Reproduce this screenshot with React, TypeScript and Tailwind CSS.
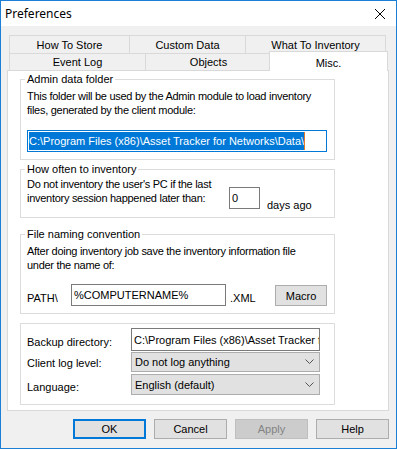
import React from "react";

const TOP_ROW = [
  { label: "How To Store", w: "w-[121px]" },
  { label: "Custom Data", w: "w-[117px]" },
  { label: "What To Inventory", w: "w-[141px]" },
];

const BOTTOM_ROW = [
  { label: "Event Log", w: "w-[137px]" },
  { label: "Objects", w: "w-[127px]" },
];

function Tab({ label, w, first }: { label: string; w: string; first?: boolean }) {
  return (
    <div
      className={`${w} ${first ? "" : "-ml-px"} flex h-full items-center justify-center border border-b-0 border-[#d9d9d9] bg-[#f0f0f0]`}
    >
      {label}
    </div>
  );
}

function Group({ title, className, children }: { title?: string; className: string; children: React.ReactNode }) {
  return (
    <div className={`relative w-[315px] border border-[#dcdcdc] pl-[6px] ${className}`}>
      {title && (
        <span className="absolute -top-[8px] left-[4px] bg-white px-[2px] leading-[14px]">{title}</span>
      )}
      {children}
    </div>
  );
}

function Chevron() {
  return (
    <svg width="9" height="6" viewBox="0 0 9 6" className="mr-[5px]">
      <polyline points="0.5,0.5 4.5,4.5 8.5,0.5" fill="none" stroke="#555" strokeWidth="1" />
    </svg>
  );
}

function Select({ value, className }: { value: string; className: string }) {
  return (
    <div
      className={`flex w-[189px] items-center justify-between border border-[#adadad] bg-[#e1e1e1] pl-[3px] ${className}`}
    >
      <span>{value}</span>
      <Chevron />
    </div>
  );
}

function Button({ label, primary, disabled }: { label: string; primary?: boolean; disabled?: boolean }) {
  const look = primary
    ? "border-2 border-[#0078d7] bg-[#e1e1e1]"
    : disabled
      ? "border border-[#bfbfbf] bg-[#cccccc] text-[#838383]"
      : "border border-[#adadad] bg-[#e1e1e1]";
  return <div className={`flex h-[20px] w-[73px] items-center justify-center ${look}`}>{label}</div>;
}

export default function App() {
  return (
    <div className="flex h-[449px] w-[397px] flex-col border border-[#1c7fd6] bg-[#f0f0f0] font-['Liberation_Sans',Arial,sans-serif] text-[11px] leading-[14px] text-black">
      {/* title bar */}
      <div className="flex h-[25px] items-center justify-between bg-white pl-[4px] pr-[11px]">
        <span className="font-['Noto_Sans',sans-serif] text-[12px]">Preferences</span>
        <svg width="10" height="10" viewBox="0 0 10 10">
          <path d="M0 0 L10 10 M10 0 L0 10" stroke="#000" strokeWidth="1" />
        </svg>
      </div>

      <div className="flex flex-1 flex-col pt-[9px] pl-[6px]">
        {/* tab rows */}
        <div className="ml-[2px] flex h-[18px]">
          {TOP_ROW.map((t, i) => (
            <Tab key={t.label} label={t.label} w={t.w} first={i === 0} />
          ))}
        </div>
        <div className="ml-[2px] flex h-[17px] items-end">
          {BOTTOM_ROW.map((t, i) => (
            <Tab key={t.label} label={t.label} w={t.w} first={i === 0} />
          ))}
          <div className="relative z-10 -mb-px -ml-[3px] flex h-[20px] w-[119px] items-center justify-center border border-b-0 border-[#d9d9d9] bg-white pt-[3px]">
            Misc.
          </div>
        </div>

        {/* tab panel */}
        <div className="flex h-[341px] w-[382px] flex-col border border-[#d9d9d9] bg-white pl-[12px] pt-[8px]">
          <Group title="Admin data folder" className="h-[81px] pt-[9px]">
            <p className="tracking-[-0.28px]">
              This folder will be used by the Admin module to load inventory
              <br />
              files, generated by the client module:
            </p>
            <div className="mt-[13px] flex h-[22px] w-[300px] items-center border border-[#0078d7] pl-px">
              <span className="bg-[#0078d7] leading-[18px] text-white">
                C:\Program Files (x86)\Asset Tracker for Networks\Data\
              </span>
              <span className="h-[18px] w-px bg-[#e07a2a]" />
            </div>
          </Group>

          <Group title="How often to inventory" className="mt-[9px] h-[49px] pt-[7px]">
            <div className="flex">
              <p className="w-[202px] tracking-[-0.28px]">
                Do not inventory the user's PC if the last
                <br />
                inventory session happened later than:
              </p>
              <div className="mt-[10px] flex h-[22px] w-[31px] items-center border border-[#7a7a7a] pl-[2px]">0</div>
              <span className="ml-[7px] mt-[21px]">days ago</span>
            </div>
          </Group>

          <Group title="File naming convention" className="mt-[16px] h-[80px] pt-[9px]">
            <p className="tracking-[-0.28px]">
              After doing inventory job save the inventory information file
              <br />
              under the name of:
            </p>
            <div className="mt-[12px] flex items-end">
              <span className="mb-[1px] w-[44px]">PATH\</span>
              <div className="flex h-[22px] w-[155px] items-center border border-[#7a7a7a] pl-[2px]">%COMPUTERNAME%</div>
              <span className="mb-[1px] ml-[4px] w-[45px]">.XML</span>
              <div className="flex h-[21px] w-[52px] items-center justify-center border border-[#adadad] bg-[#e1e1e1]">
                Macro
              </div>
            </div>
          </Group>

          <Group className="mt-[9px] h-[82px] pt-[4px]">
            <div className="flex items-center">
              <span className="mt-[4px] w-[104px]">Backup directory:</span>
              <div className="flex h-[23px] w-[189px] items-center overflow-hidden whitespace-nowrap border border-[#7a7a7a] pl-[2px]">
                C:\Program Files (x86)\Asset Tracker f
              </div>
            </div>
            <div className="mt-[1px] flex items-center">
              <span className="mt-[2px] w-[104px]">Client log level:</span>
              <Select value="Do not log anything" className="h-[20px]" />
            </div>
            <div className="mt-[2px] flex items-center">
              <span className="mt-[5px] w-[104px]">Language:</span>
              <Select value="English (default)" className="h-[21px]" />
            </div>
          </Group>
        </div>

        {/* dialog buttons */}
        <div className="mt-[8px] flex gap-[8px] pl-[66px]">
          <Button label="OK" primary />
          <Button label="Cancel" />
          <Button label="Apply" disabled />
          <Button label="Help" />
        </div>
      </div>
    </div>
  );
}
